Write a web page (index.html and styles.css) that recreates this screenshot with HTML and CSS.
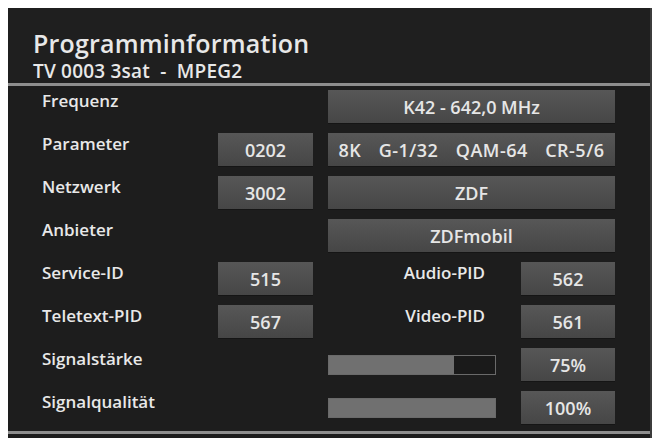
FILE: index.html
```html
<!DOCTYPE html>
<html>
<head>
<meta charset="utf-8">
<link rel="stylesheet" href="styles.css">
</head>
<body>
<div class="panel">
  <div class="header">
    <div class="title">Programminformation</div>
    <div class="subtitle">TV 0003 3sat  -  MPEG2</div>
  </div>
  <div class="grid">
    <div class="label">Frequenz</div>
    <div></div>
    <div class="box wide">K42 - 642,0 MHz</div>

    <div class="label">Parameter</div>
    <div class="box">0202</div>
    <div class="box wide pre">8K  G-1/32  QAM-64  CR-5/6</div>

    <div class="label">Netzwerk</div>
    <div class="box">3002</div>
    <div class="box wide">ZDF</div>

    <div class="label">Anbieter</div>
    <div></div>
    <div class="box wide">ZDFmobil</div>

    <div class="label">Service-ID</div>
    <div class="box">515</div>
    <div class="label right">Audio-PID</div>
    <div class="box">562</div>

    <div class="label">Teletext-PID</div>
    <div class="box">567</div>
    <div class="label right">Video-PID</div>
    <div class="box">561</div>

    <div class="label">Signalstärke</div>
    <div></div>
    <div class="barcell"><div class="bar"><div class="fill" style="width:75%"></div></div></div>
    <div class="box">75%</div>

    <div class="label">Signalqualität</div>
    <div></div>
    <div class="barcell"><div class="bar"><div class="fill" style="width:100%"></div></div></div>
    <div class="box">100%</div>
  </div>
  <div class="footer"></div>
</div>
</body>
</html>
```
FILE: styles.css
```css
html, body {
  margin: 0;
  padding: 0;
  background: #ffffff;
}
body {
  padding: 8px 8px 0 8px;
  font-family: "Open Sans", "DejaVu Sans", sans-serif;
  color: #e8e8e8;
}
.panel {
  width: 642px;
  height: 430px;
  background: #1d1d1d;
  border-right: 2px solid #3c3c3c;
  display: flex;
  flex-direction: column;
}
.header {
  height: 78px;
  background: #1f1f1f;
  padding-left: 25px;
  box-sizing: border-box;
  padding-top: 20px;
  border-bottom: 3px solid #8e8e8e;
}
.title {
  font-size: 25px;
  font-weight: 600;
  line-height: 30px;
  letter-spacing: 0.2px;
}
.subtitle {
  font-size: 19px;
  font-weight: 600;
  line-height: 22px;
  margin-top: 2px;
  white-space: pre;
  letter-spacing: 0.2px;
}
.grid {
  display: grid;
  grid-template-columns: 161px 95px 178px 94px;
  grid-auto-rows: 33px;
  column-gap: 15px;
  row-gap: 10px;
  padding: 4px 0 0 34px;
  height: 345px;
  box-sizing: border-box;
}
.label {
  font-size: 17px;
  font-weight: 600;
  line-height: 22px;
  padding-top: 0;
  white-space: nowrap;
}
.label.right {
  text-align: right;
  padding-right: 21px;
}
.box {
  background: linear-gradient(#575757, #464646);
  box-shadow: 0 1px 0 #151515;
  display: flex;
  align-items: center;
  justify-content: center;
  font-size: 18px;
  font-weight: 600;
  color: #e6e6e6;
  white-space: nowrap;
}
.box.wide {
  grid-column: 3 / span 2;
}
.pre {
  white-space: pre;
  letter-spacing: 0.5px;
  word-spacing: 3.5px;
}
.barcell {
  display: flex;
  align-items: center;
}
.bar {
  width: 166px;
  height: 18px;
  border: 1px solid #6a6a6a;
  background: #1a1a1a;
}
.fill {
  height: 100%;
  background: #707070;
}
.footer {
  margin-top: 0;
  height: 4px;
  border-top: 3px solid #8e8e8e;
}
```
